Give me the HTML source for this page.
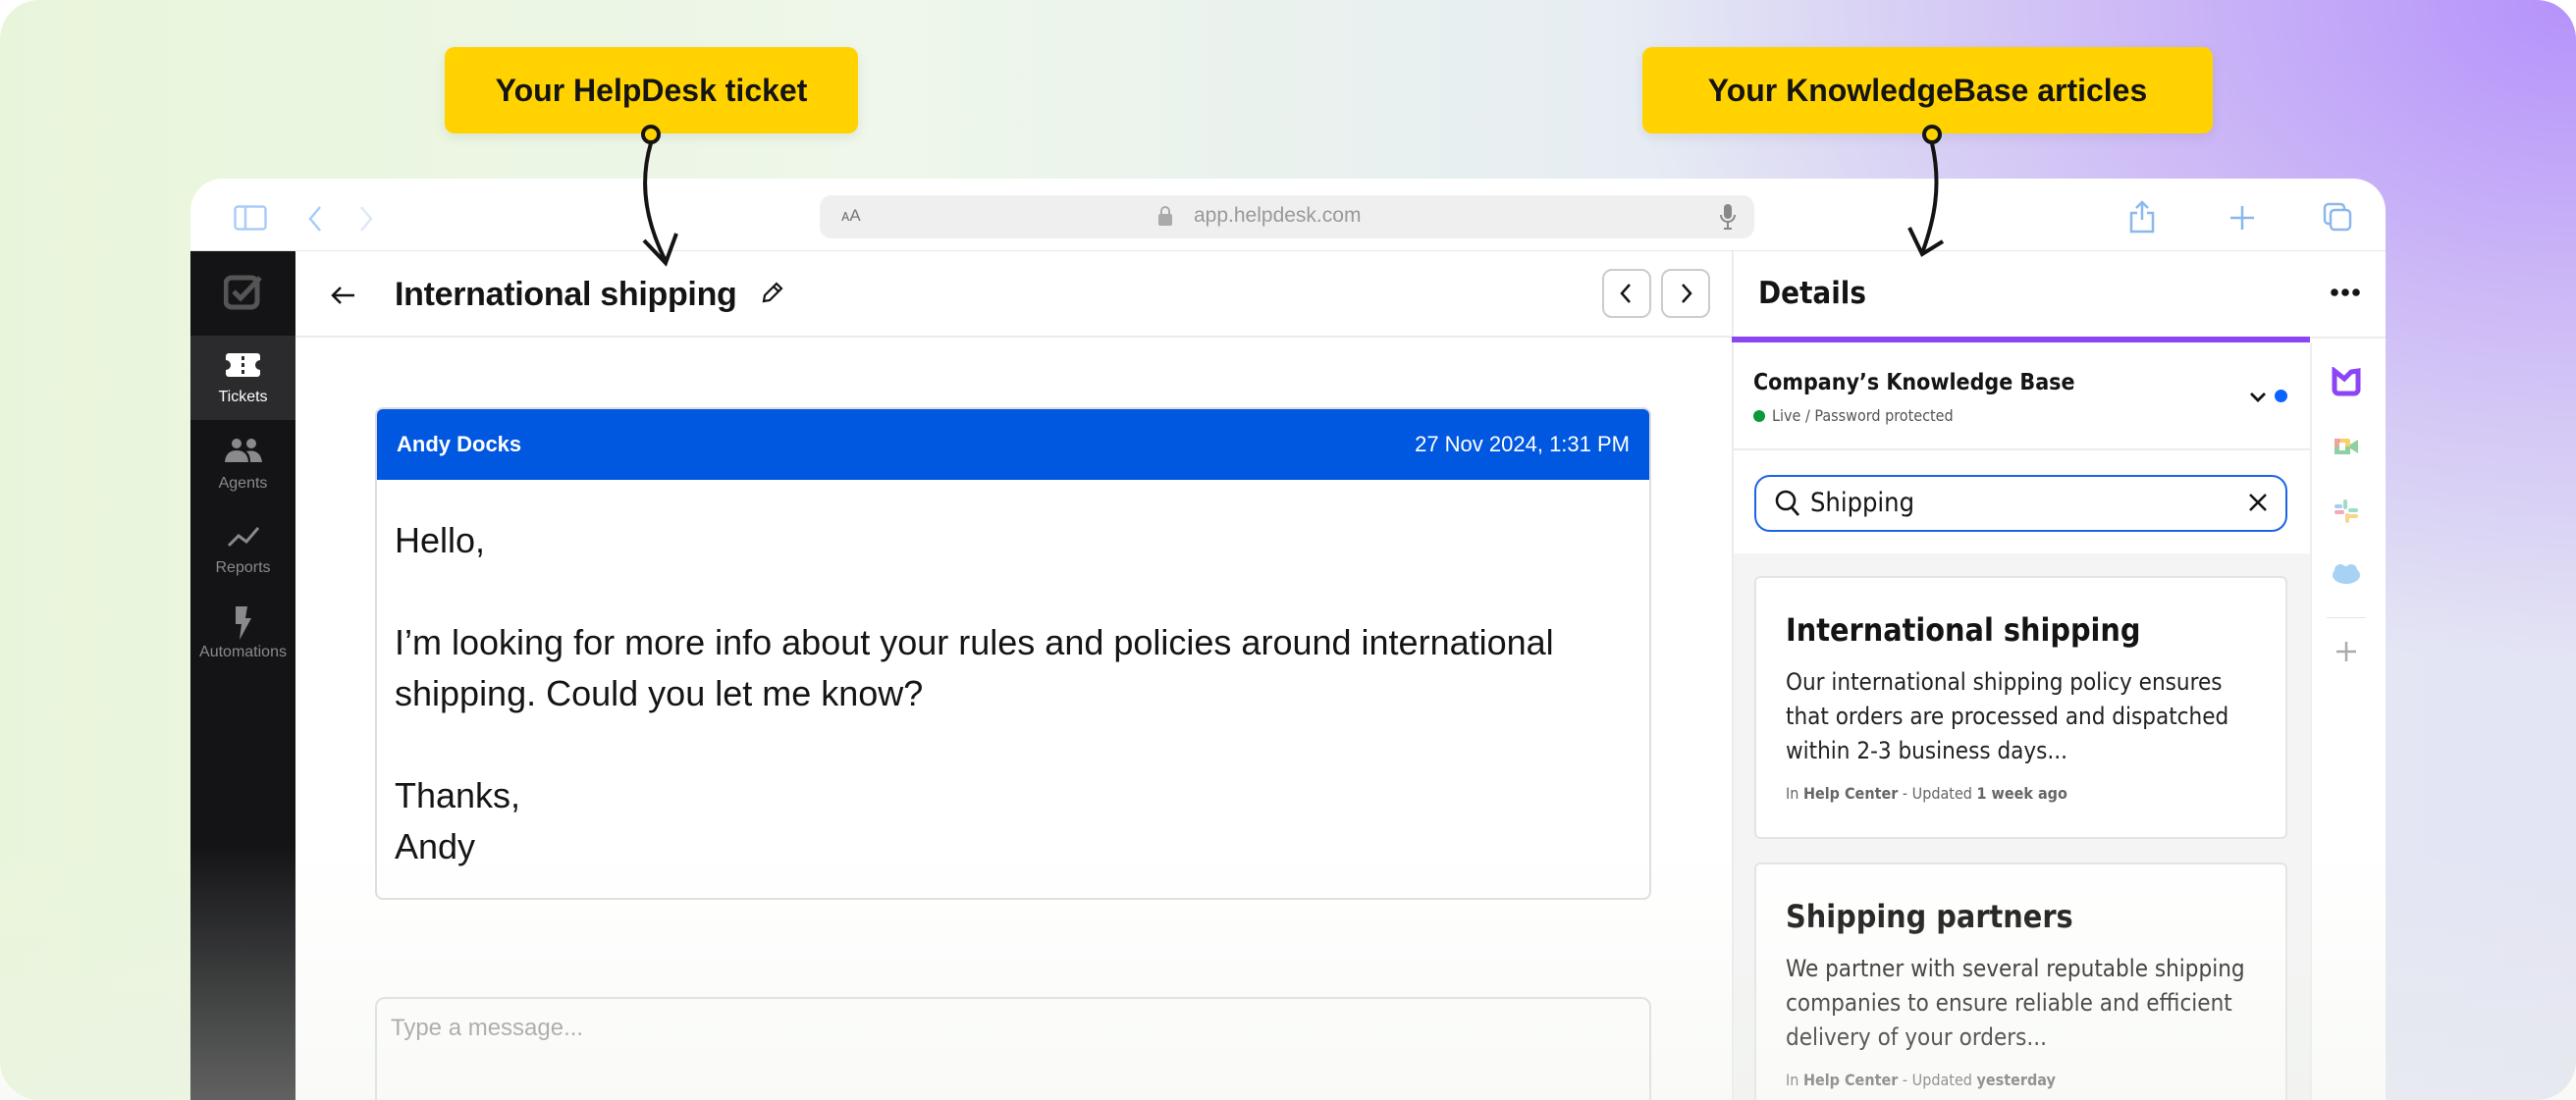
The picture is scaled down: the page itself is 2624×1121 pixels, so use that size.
<!DOCTYPE html>
<html><head><meta charset="utf-8"><style>
*{margin:0;padding:0;box-sizing:border-box}
html,body{width:2624px;height:1121px;overflow:hidden}
body{background:#fff;font-family:"Liberation Sans",sans-serif;position:relative}
.bg{position:absolute;left:0;top:0;width:2624px;height:1121px;border-radius:40px;overflow:hidden;
background:radial-gradient(ellipse 1300px 900px at 2624px 0px,#b592fb 0%,#cdbaf6 35%,rgba(220,215,245,0) 75%),linear-gradient(90deg,#e9f5db 0%,#eef7ea 35%,#e6ecf3 65%,#e3e4f4 100%)}
.a{position:absolute}
.win{left:194px;top:182px;width:2236px;height:939px;background:#fff;border-radius:33px 33px 0 0;overflow:hidden}
.callout{background:#ffd200;border-radius:10px;font-weight:bold;font-size:32px;color:#141414;display:flex;align-items:center;justify-content:center;box-shadow:0 4px 12px rgba(0,0,0,.08)}
.side{left:0;top:74px;width:107px;height:870px;background:#141417}
.nav{position:absolute;left:0;width:107px;text-align:center;color:#8a8a8e;font-size:16px}
.kb{font-family:"DejaVu Sans Condensed","Liberation Sans",sans-serif}
</style></head><body>
<div class="bg"></div>

<div class="a callout" style="left:453px;top:48px;width:421px;height:88px">Your HelpDesk ticket</div>
<div class="a callout" style="left:1673px;top:48px;width:581px;height:88px">Your KnowledgeBase articles</div>

<div class="a win">
  <svg class="a" style="left:44px;top:27px" width="34" height="26" viewBox="0 0 34 26"><rect x="1.5" y="1.5" width="31" height="23" rx="3" fill="none" stroke="#a9cdf6" stroke-width="2.5"/><line x1="12" y1="2" x2="12" y2="24" stroke="#a9cdf6" stroke-width="2.5"/></svg>
  <svg class="a" style="left:119px;top:27px" width="16" height="28"><path d="M13 2 L3 14 L13 26" fill="none" stroke="#a9cdf6" stroke-width="2.5"/></svg>
  <svg class="a" style="left:171px;top:27px" width="16" height="28"><path d="M3 2 L13 14 L3 26" fill="none" stroke="#dde8f4" stroke-width="2.5"/></svg>
  <div class="a" style="left:641px;top:17px;width:952px;height:44px;background:#efefef;border-radius:12px"></div>
  <div class="a" style="left:663px;top:28px;font-size:17px;color:#777">ᴀA</div>
  <svg class="a" style="left:985px;top:27px" width="16" height="22"><rect x="1" y="9" width="14" height="12" rx="2" fill="#aaa"/><path d="M4 9 V6 a4 4 0 0 1 8 0 V9" fill="none" stroke="#aaa" stroke-width="2"/></svg>
  <div class="a" style="left:1022px;top:26px;font-size:21px;color:#999">app.helpdesk.com</div>
  <svg class="a" style="left:1558px;top:25px" width="16" height="28"><rect x="4" y="1" width="8" height="15" rx="4" fill="#888"/><path d="M1 12 a7 7 0 0 0 14 0 M8 19 v6 M4 26 h8" fill="none" stroke="#888" stroke-width="2"/></svg>
  <svg class="a" style="left:1974px;top:22px" width="28" height="34"><path d="M14 2 V20 M8 8 L14 2 L20 8 M9 13 H3 V32 H25 V13 H19" fill="none" stroke="#8ab8ee" stroke-width="2.5"/></svg>
  <svg class="a" style="left:2076px;top:26px" width="28" height="28"><path d="M14 2 V26 M2 14 H26" stroke="#8ab8ee" stroke-width="2.5"/></svg>
  <svg class="a" style="left:2172px;top:24px" width="30" height="30"><rect x="2" y="2" width="20" height="20" rx="4" fill="none" stroke="#8ab8ee" stroke-width="2.5"/><rect x="8" y="8" width="20" height="20" rx="4" fill="#fff" stroke="#8ab8ee" stroke-width="2.5"/></svg>
  <div class="a" style="left:0;top:73px;width:2236px;height:1px;background:#e8e8e8"></div>

  <div class="a side">
    <svg class="a" style="left:34px;top:24px" width="40" height="36" viewBox="0 0 40 36"><rect x="2" y="3" width="32" height="30" rx="6" fill="none" stroke="#555" stroke-width="5"/><path d="M10 17 L17 24 L37 3" fill="none" stroke="#555" stroke-width="5"/></svg>
    <div class="a" style="left:0;top:86px;width:107px;height:86px;background:#2b2b2e"></div>
    <svg class="a" style="left:36px;top:104px" width="35" height="24"><path d="M3 0 H32 a3 3 0 0 1 3 3 V7 a5 5 0 0 0 0 10 V21 a3 3 0 0 1 -3 3 H3 a3 3 0 0 1 -3 -3 V17 a5 5 0 0 0 0 -10 V3 a3 3 0 0 1 3 -3Z" fill="#fff"/><rect x="16" y="3" width="3" height="4" fill="#2b2b2e"/><rect x="16" y="10" width="3" height="4" fill="#2b2b2e"/><rect x="16" y="17" width="3" height="4" fill="#2b2b2e"/></svg>
    <div class="nav" style="top:140px;color:#fff">Tickets</div>
    <svg class="a" style="left:35px;top:191px" width="38" height="24"><circle cx="12" cy="5" r="5" fill="#8a8a8e"/><circle cx="27" cy="5" r="5" fill="#8a8a8e"/><path d="M0 24 Q1 12 12 12 Q23 12 24 24Z M26 24 Q26 16 22 13 Q36 10 38 24Z" fill="#8a8a8e"/></svg>
    <div class="nav" style="top:228px">Agents</div>
    <svg class="a" style="left:37px;top:280px" width="34" height="22"><path d="M2 20 L12 10 L20 16 L32 2" fill="none" stroke="#8a8a8e" stroke-width="3"/></svg>
    <div class="nav" style="top:314px">Reports</div>
    <svg class="a" style="left:44px;top:362px" width="20" height="34"><path d="M2 0 H14 L12 12 H18 L6 34 L8 18 H2Z" fill="#8a8a8e"/></svg>
    <div class="nav" style="top:400px">Automations</div>
  </div>

  <svg class="a" style="left:143px;top:109px" width="26" height="20"><path d="M2 10 H24 M10 2 L2 10 L10 18" fill="none" stroke="#141414" stroke-width="2.5"/></svg>
  <div class="a" style="left:208px;top:99px;font-size:34px;font-weight:bold;color:#141414;letter-spacing:-0.3px">International shipping</div>
  <svg class="a" style="left:580px;top:103px" width="26" height="26"><path d="M4 22 L5 16 L17 4 L22 9 L10 21Z M14 7 L19 12" fill="none" stroke="#141414" stroke-width="2.2"/></svg>
  <div class="a" style="left:1438px;top:92px;width:50px;height:50px;border:2px solid #ccc;border-radius:10px"></div>
  <svg class="a" style="left:1455px;top:106px" width="14" height="22"><path d="M11 2 L3 11 L11 20" fill="none" stroke="#141414" stroke-width="2.5"/></svg>
  <div class="a" style="left:1498px;top:92px;width:50px;height:50px;border:2px solid #ccc;border-radius:10px"></div>
  <svg class="a" style="left:1517px;top:106px" width="14" height="22"><path d="M3 2 L11 11 L3 20" fill="none" stroke="#141414" stroke-width="2.5"/></svg>
  <div class="a" style="left:107px;top:160px;width:1463px;height:2px;background:#ececec"></div>

  <div class="a" style="left:188px;top:233px;width:1300px;height:502px;border:2px solid #dedede;border-radius:8px;overflow:hidden">
    <div style="height:72px;background:#0058e0;color:#fff;font-size:22px;display:flex;justify-content:space-between;align-items:center;padding:0 20px"><b>Andy Docks</b><span>27 Nov 2024, 1:31 PM</span></div>
    <div style="padding:36px 18px;font-size:36px;line-height:52px;color:#141414;width:1250px">Hello,<br><br>I’m looking for more info about your rules and policies around international shipping. Could you let me know?<br><br>Thanks,<br>Andy</div>
  </div>
  <div class="a" style="left:188px;top:834px;width:1300px;height:200px;border:2px solid #dedede;border-radius:10px;padding:16px 14px;font-size:24px;color:#999">Type a message...</div>

  <div class="a" style="left:1570px;top:74px;width:2px;height:950px;background:#ececec"></div>
  <div class="a kb" style="left:1597px;top:99px;font-size:31px;font-weight:bold;color:#141414">Details</div>
  <svg class="a" style="left:2180px;top:112px" width="30" height="8"><circle cx="4" cy="4" r="3.8" fill="#141414"/><circle cx="15" cy="4" r="3.8" fill="#141414"/><circle cx="26" cy="4" r="3.8" fill="#141414"/></svg>
  <div class="a" style="left:1572px;top:161px;width:664px;height:2px;background:#ececec"></div>
  <div class="a" style="left:1570px;top:161px;width:589px;height:6px;background:#8b45f5"></div>
  <div class="a" style="left:2159px;top:167px;width:2px;height:900px;background:#eee"></div>
  <div class="a kb" style="left:1592px;top:195px;font-size:23px;font-weight:bold;color:#141414">Company’s Knowledge Base</div>
  <div class="a" style="left:1592px;top:236px;width:12px;height:12px;border-radius:50%;background:#0a9a3c"></div>
  <div class="a kb" style="left:1611px;top:232px;font-size:16px;color:#555">Live / Password protected</div>
  <svg class="a" style="left:2097px;top:217px" width="18" height="12"><path d="M2 2 L9 9 L16 2" fill="none" stroke="#141414" stroke-width="2.8"/></svg>
  <div class="a" style="left:2123px;top:215px;width:13px;height:13px;border-radius:50%;background:#0a64ff"></div>
  <div class="a" style="left:1572px;top:275px;width:587px;height:2px;background:#ececec"></div>
  <div class="a" style="left:1593px;top:302px;width:543px;height:58px;border:2px solid #1b64e6;border-radius:16px"></div>
  <svg class="a" style="left:1613px;top:316px" width="28" height="30"><circle cx="12" cy="12" r="9" fill="none" stroke="#141414" stroke-width="2.6"/><path d="M18 19 L25 27" stroke="#141414" stroke-width="2.8"/></svg>
  <div class="a kb" style="left:1650px;top:315px;font-size:27px;color:#141414">Shipping</div>
  <svg class="a" style="left:2096px;top:320px" width="20" height="20"><path d="M2 2 L18 18 M18 2 L2 18" stroke="#141414" stroke-width="2.5"/></svg>
  <div class="a" style="left:1572px;top:382px;width:587px;height:700px;background:#f4f4f5"></div>
  <div class="a" style="left:1593px;top:405px;width:543px;height:268px;background:#fff;border:2px solid #e4e4e6;border-radius:6px"></div>
  <div class="a kb" style="left:1625px;top:441px;font-size:32px;font-weight:bold;color:#141414">International shipping</div>
  <div class="a kb" style="left:1625px;top:496px;font-size:24px;line-height:35px;color:#222;width:470px">Our international shipping policy ensures that orders are processed and dispatched within 2-3 business days...</div>
  <div class="a kb" style="left:1625px;top:617px;font-size:16px;color:#666">In <b>Help Center</b> - Updated <b>1 week ago</b></div>
  <div class="a" style="left:1593px;top:697px;width:543px;height:400px;background:#fff;border:2px solid #e4e4e6;border-radius:6px"></div>
  <div class="a kb" style="left:1625px;top:733px;font-size:32px;font-weight:bold;color:#141414">Shipping partners</div>
  <div class="a kb" style="left:1625px;top:788px;font-size:24px;line-height:35px;color:#222;width:480px">We partner with several reputable shipping companies to ensure reliable and efficient delivery of your orders...</div>
  <div class="a kb" style="left:1625px;top:909px;font-size:16px;color:#666">In <b>Help Center</b> - Updated <b>yesterday</b></div>

  <svg class="a" style="left:2181px;top:192px" width="30" height="30"><path d="M3 4 L13 12 L20 5 L27 4 V23 a4 4 0 0 1 -4 4 H7 a4 4 0 0 1 -4 -4Z" fill="none" stroke="#8b45f5" stroke-width="5"/></svg>
  <svg class="a" style="left:2183px;top:262px" width="26" height="22"><rect x="1" y="3" width="16" height="16" rx="2" fill="#f6d26b"/><rect x="1" y="11" width="16" height="8" fill="#8fd0a0"/><rect x="1" y="3" width="6" height="8" fill="#f3a29a"/><rect x="6" y="7" width="6" height="8" fill="#fff"/><path d="M17 9 L25 4 V18 L17 13Z" fill="#8fd0a0"/></svg>
  <svg class="a" style="left:2184px;top:327px" width="24" height="24"><rect x="9" y="0" width="4" height="10" rx="2" fill="#9fdcc8"/><rect x="14" y="9" width="10" height="4" rx="2" fill="#9fdcc8"/><rect x="0" y="11" width="10" height="4" rx="2" fill="#f5a9b8"/><rect x="11" y="14" width="4" height="10" rx="2" fill="#f7d78a"/><rect x="0" y="5" width="8" height="4" rx="2" fill="#a6cdf2"/><rect x="14" y="15" width="10" height="4" rx="2" fill="#f7d78a"/></svg>
  <svg class="a" style="left:2181px;top:393px" width="30" height="22"><ellipse cx="15" cy="11" rx="14" ry="9" fill="#a8d2f4"/><circle cx="9" cy="6" r="6" fill="#a8d2f4"/><circle cx="20" cy="6" r="6" fill="#a8d2f4"/></svg>
  <div class="a" style="left:2176px;top:447px;width:40px;height:1px;background:#e4e4e4"></div>
  <svg class="a" style="left:2185px;top:471px" width="22" height="22"><path d="M11 1 V21 M1 11 H21" stroke="#aaa" stroke-width="2.5"/></svg>
</div>

<div class="a" style="left:0;top:860px;width:2624px;height:261px;background:linear-gradient(rgba(245,245,240,0),rgba(238,242,232,.35))"></div>

<svg class="a" style="left:0;top:0" width="2624" height="300">
  <circle cx="663" cy="137" r="8" fill="#ffd200" stroke="#141414" stroke-width="4"/>
  <path d="M663 146 C 650 190, 660 230, 678 266" fill="none" stroke="#141414" stroke-width="4"/>
  <path d="M656 245 L678 268 L689 238" fill="none" stroke="#141414" stroke-width="4"/>
  <circle cx="1968" cy="137" r="8" fill="#ffd200" stroke="#141414" stroke-width="4"/>
  <path d="M1968 146 C 1978 190, 1970 225, 1958 258" fill="none" stroke="#141414" stroke-width="4"/>
  <path d="M1945 232 L1958 259 L1979 246" fill="none" stroke="#141414" stroke-width="4"/>
</svg>
</body></html>
